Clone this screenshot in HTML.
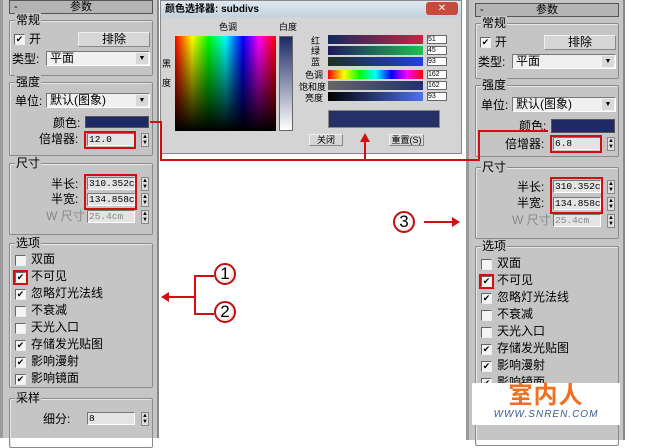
<!DOCTYPE html><html><head><meta charset="utf-8"><style>
*{margin:0;padding:0;box-sizing:border-box}
body{width:650px;height:429px;background:#fff;position:relative;overflow:hidden;font-family:"Liberation Sans","Noto Sans CJK SC",sans-serif;font-size:11px;color:#000}
.a{position:absolute}
.pan{position:absolute;width:159px;height:440px;background:#c5c5c5;border-left:3px solid #9a9a9a;border-right:2px solid #888}
.hdr{position:absolute;left:6px;top:0;width:144px;height:14px;background:#b4b4b4;border:1px solid #555;text-align:center;line-height:12px;font-size:11px}
.hdr b{position:absolute;left:4px;font-weight:normal}
.grp{position:absolute;left:6px;width:144px;border:1px solid #8a8a8a;border-radius:2px;box-shadow:inset 1px 1px 0 #e8e8e8}
.gt{position:absolute;top:-8px;left:5px;background:#c5c5c5;padding:0 1px;font-size:12px;line-height:14px}
.cb{position:absolute;width:11px;height:11px;background:#f4f4f4;border:1px solid #666;border-right-color:#eee;border-bottom-color:#eee;font-size:9px;line-height:9px;text-align:center}
.lb{position:absolute;font-size:12px;line-height:13px;white-space:nowrap}
.dd{position:absolute;background:#f0f0f0;border:1px solid #777;border-right-color:#fff;border-bottom-color:#fff;height:15px;line-height:13px;padding-left:3px;font-size:12px}
.dd i{position:absolute;right:1px;top:1px;width:12px;height:11px;background:#d8d8d8;font-style:normal;font-size:7px;text-align:center;line-height:11px}
.sp{position:absolute;background:#e4e4e4;border:1px solid #777;border-right-color:#fff;border-bottom-color:#fff;height:13px;line-height:11px;padding-left:1px;font-family:"Liberation Mono",monospace;font-size:9.5px;overflow:hidden;white-space:nowrap}
.ar{position:absolute;width:8px;height:14px;background:#ddd;border:1px solid #888;font-size:6px;line-height:6px;text-align:center}
.rb{position:absolute;border:2px solid #d01010}
.btn{position:absolute;background:#d6d6d6;border:1px solid #888;border-top-color:#eee;border-left-color:#eee;text-align:center;line-height:13px;font-size:12px}
.circ{position:absolute;width:22px;height:22px;border-radius:50%;border:2px solid #c01010;background:radial-gradient(circle at 40% 35%,#fff 40%,#f0c8c8);text-align:center;font-size:17px;line-height:18px;font-family:"Liberation Sans",sans-serif}
.rl{position:absolute;background:#d01010}
</style></head><body>

<!-- LEFT PANEL -->
<div class="pan" style="left:0;top:-2px">
 <div style="position:absolute;top:2px;left:0;width:152px;height:440px">
 <div class="hdr"><b>-</b>参数</div>
 <div class="grp" style="top:20px;height:56px"><span class="gt">常规</span></div>
 <div class="cb" style="left:11px;top:34px">✔</div><span class="lb" style="left:26px;top:33px">开</span>
 <div class="btn" style="left:75px;top:32px;width:72px;height:15px">排除</div>
 <span class="lb" style="left:9px;top:53px">类型:</span>
 <div class="dd" style="left:43px;top:51px;width:104px">平面<i>▼</i></div>
 <div class="grp" style="top:82px;height:74px"><span class="gt">强度</span></div>
 <span class="lb" style="left:12px;top:95px">单位:</span>
 <div class="dd" style="left:43px;top:93px;width:104px">默认(图象)<i>▼</i></div>
 <span class="lb" style="left:50px;top:117px">颜色:</span>
 <div class="a" style="left:82px;top:116px;width:64px;height:12px;background:#1d2a63;border:1px solid #555"></div>
 <span class="lb" style="left:36px;top:133px">倍增器:</span>
 <div class="sp" style="left:84px;top:133px;width:48px">12.0</div>
 <div class="rb" style="left:81px;top:131px;width:52px;height:18px"></div>
 <div class="ar" style="left:138px;top:133px">▲<br>▼</div>
 <div class="grp" style="top:163px;height:72px"><span class="gt">尺寸</span></div>
 <span class="lb" style="left:48px;top:178px">半长:</span>
 <div class="sp" style="left:84px;top:177px;width:48px">310.352c</div>
 <span class="lb" style="left:48px;top:193px">半宽:</span>
 <div class="sp" style="left:84px;top:193px;width:48px">134.858c</div>
 <div class="rb" style="left:81px;top:174px;width:53px;height:36px"></div>
 <div class="ar" style="left:138px;top:177px">▲<br>▼</div><div class="ar" style="left:138px;top:193px">▲<br>▼</div>
 <span class="lb" style="left:43px;top:210px;color:#888">W 尺寸</span>
 <div class="sp" style="left:84px;top:210px;width:48px;color:#888">25.4cm</div>
 <div class="ar" style="left:138px;top:210px">▲<br>▼</div>
 <div class="grp" style="top:243px;height:145px"><span class="gt">选项</span></div>
 <div class="cb" style="left:12px;top:255px"></div><span class="lb" style="left:28px;top:253px">双面</span>
 <div class="cb" style="left:12px;top:272px">✔</div><div class="rb" style="left:10px;top:270px;width:15px;height:15px"></div><span class="lb" style="left:28px;top:270px">不可见</span>
 <div class="cb" style="left:12px;top:289px">✔</div><span class="lb" style="left:28px;top:287px">忽略灯光法线</span>
 <div class="cb" style="left:12px;top:306px"></div><span class="lb" style="left:28px;top:304px">不衰减</span>
 <div class="cb" style="left:12px;top:323px"></div><span class="lb" style="left:28px;top:321px">天光入口</span>
 <div class="cb" style="left:12px;top:340px">✔</div><span class="lb" style="left:28px;top:338px">存储发光贴图</span>
 <div class="cb" style="left:12px;top:357px">✔</div><span class="lb" style="left:28px;top:355px">影响漫射</span>
 <div class="cb" style="left:12px;top:374px">✔</div><span class="lb" style="left:28px;top:372px">影响镜面</span>
 <div class="grp" style="top:398px;height:50px"><span class="gt">采样</span></div>
 <span class="lb" style="left:40px;top:413px">细分:</span>
 <div class="sp" style="left:84px;top:412px;width:48px">8</div>
 <div class="ar" style="left:138px;top:412px">▲<br>▼</div>
 </div>
</div>

<!-- RIGHT PANEL -->
<div class="pan" style="left:466px;top:0">
 <div style="position:absolute;top:3px;left:0;width:152px;height:440px">
 <div class="hdr"><b>-</b>参数</div>
 <div class="grp" style="top:20px;height:56px"><span class="gt">常规</span></div>
 <div class="cb" style="left:11px;top:34px">✔</div><span class="lb" style="left:26px;top:33px">开</span>
 <div class="btn" style="left:75px;top:32px;width:72px;height:15px">排除</div>
 <span class="lb" style="left:9px;top:53px">类型:</span>
 <div class="dd" style="left:43px;top:51px;width:104px">平面<i>▼</i></div>
 <div class="grp" style="top:82px;height:72px"><span class="gt">强度</span></div>
 <span class="lb" style="left:12px;top:96px">单位:</span>
 <div class="dd" style="left:43px;top:94px;width:104px">默认(图象)<i>▼</i></div>
 <span class="lb" style="left:50px;top:117px">颜色:</span>
 <div class="a" style="left:82px;top:116px;width:64px;height:14px;background:#1d2a63;border:1px solid #555"></div>
 <span class="lb" style="left:36px;top:135px">倍增器:</span>
 <div class="sp" style="left:84px;top:134px;width:48px">6.8</div>
 <div class="rb" style="left:81px;top:132px;width:52px;height:18px"></div>
 <div class="ar" style="left:138px;top:134px">▲<br>▼</div>
 <div class="grp" style="top:164px;height:72px"><span class="gt">尺寸</span></div>
 <span class="lb" style="left:48px;top:178px">半长:</span>
 <div class="sp" style="left:84px;top:177px;width:48px">310.352c</div>
 <span class="lb" style="left:48px;top:194px">半宽:</span>
 <div class="sp" style="left:84px;top:194px;width:48px">134.858c</div>
 <div class="rb" style="left:81px;top:174px;width:53px;height:37px"></div>
 <div class="ar" style="left:138px;top:177px">▲<br>▼</div><div class="ar" style="left:138px;top:194px">▲<br>▼</div>
 <span class="lb" style="left:43px;top:211px;color:#888">W 尺寸</span>
 <div class="sp" style="left:84px;top:211px;width:48px;color:#888">25.4cm</div>
 <div class="ar" style="left:138px;top:211px">▲<br>▼</div>
 <div class="grp" style="top:243px;height:200px"><span class="gt">选项</span></div>
 <div class="cb" style="left:12px;top:256px"></div><span class="lb" style="left:28px;top:254px">双面</span>
 <div class="cb" style="left:12px;top:273px">✔</div><div class="rb" style="left:10px;top:271px;width:15px;height:15px"></div><span class="lb" style="left:28px;top:271px">不可见</span>
 <div class="cb" style="left:12px;top:290px">✔</div><span class="lb" style="left:28px;top:288px">忽略灯光法线</span>
 <div class="cb" style="left:12px;top:307px"></div><span class="lb" style="left:28px;top:305px">不衰减</span>
 <div class="cb" style="left:12px;top:324px"></div><span class="lb" style="left:28px;top:322px">天光入口</span>
 <div class="cb" style="left:12px;top:341px">✔</div><span class="lb" style="left:28px;top:339px">存储发光贴图</span>
 <div class="cb" style="left:12px;top:358px">✔</div><span class="lb" style="left:28px;top:356px">影响漫射</span>
 <div class="cb" style="left:12px;top:375px">✔</div><span class="lb" style="left:28px;top:373px">影响镜面</span>
 </div>
</div>
<div class="a" style="left:472px;top:383px;width:148px;height:42px;background:#fff"></div>
<div class="a" style="left:472px;top:381px;width:148px;text-align:center;color:#f07020;font-size:24px;font-weight:bold;letter-spacing:1px;line-height:30px">室内人</div>
<div class="a" style="left:472px;top:409px;width:148px;text-align:center;color:#3a5aa0;font-size:10px;font-style:italic;letter-spacing:1px">WWW.SNREN.COM</div>

<!-- DIALOG -->
<div class="a" style="left:160px;top:0;width:302px;height:154px;background:#d4d4d4;border:1px solid #888">
 <div class="a" style="left:0;top:0;width:300px;height:16px;background:linear-gradient(#dfe8f0,#c4d2de)"></div>
 <span class="lb" style="left:4px;top:2px;font-size:10px;font-weight:bold">颜色选择器: subdivs</span>
 <div class="a" style="left:265px;top:1px;width:32px;height:13px;background:#c84a3a;border-radius:3px;color:#fff;text-align:center;font-size:10px;line-height:13px">✕</div>
 <span class="lb" style="left:58px;top:20px;font-size:9px">色调</span>
 <span class="lb" style="left:118px;top:20px;font-size:9px">白度</span>
 <span class="lb" style="left:1px;top:57px;font-size:9px">黑</span><span class="lb" style="left:1px;top:76px;font-size:9px">度</span>
 <div class="a" style="left:14px;top:35px;width:101px;height:95px;background:linear-gradient(transparent,#000),linear-gradient(90deg,#f00,#ff0 17%,#0f0 33%,#0ff 50%,#00f 67%,#f0f 83%,#f00)"></div>
 <div class="a" style="left:118px;top:35px;width:14px;height:95px;background:linear-gradient(#1d2a63,#fff);border:1px solid #666"></div>
 <span class="lb" style="left:150px;top:34px;font-size:9px">红</span><span class="lb" style="left:150px;top:44px;font-size:9px">绿</span><span class="lb" style="left:150px;top:55px;font-size:9px">蓝</span>
 <span class="lb" style="left:144px;top:68px;font-size:9px">色调</span><span class="lb" style="left:138px;top:80px;font-size:9px">饱和度</span><span class="lb" style="left:144px;top:91px;font-size:9px">亮度</span>
 <div class="a" style="left:167px;top:34px;width:95px;height:9px;background:linear-gradient(90deg,#102a60,#d02040)"></div>
 <div class="a" style="left:167px;top:45px;width:95px;height:9px;background:linear-gradient(90deg,#201860,#20c050)"></div>
 <div class="a" style="left:167px;top:56px;width:95px;height:9px;background:linear-gradient(90deg,#203020,#2040e0)"></div>
 <div class="a" style="left:167px;top:69px;width:95px;height:9px;background:linear-gradient(90deg,#f00,#ff0,#0f0,#0ff,#00f,#f0f,#f00)"></div>
 <div class="a" style="left:167px;top:80px;width:95px;height:9px;background:linear-gradient(90deg,#666,#223070)"></div>
 <div class="a" style="left:167px;top:91px;width:95px;height:9px;background:linear-gradient(90deg,#000,#5070f0)"></div>
 <div class="a" style="left:266px;top:34px;width:20px;height:9px;background:#fff;border:1px solid #666;font-size:7px;line-height:7px">51</div>
 <div class="a" style="left:266px;top:45px;width:20px;height:9px;background:#fff;border:1px solid #666;font-size:7px;line-height:7px">45</div>
 <div class="a" style="left:266px;top:56px;width:20px;height:9px;background:#fff;border:1px solid #666;font-size:7px;line-height:7px">93</div>
 <div class="a" style="left:266px;top:69px;width:20px;height:9px;background:#fff;border:1px solid #666;font-size:7px;line-height:7px">162</div>
 <div class="a" style="left:266px;top:80px;width:20px;height:9px;background:#fff;border:1px solid #666;font-size:7px;line-height:7px">162</div>
 <div class="a" style="left:266px;top:91px;width:20px;height:9px;background:#fff;border:1px solid #666;font-size:7px;line-height:7px">93</div>
 <div class="a" style="left:167px;top:109px;width:112px;height:18px;background:#243066;border:1px solid #888"></div>
 <div class="btn" style="left:148px;top:133px;width:34px;height:12px;font-size:9px;line-height:10px">关闭</div>
 <div class="btn" style="left:228px;top:133px;width:35px;height:12px;font-size:9px;line-height:10px">重置(S)</div>
</div>

<!-- red lines -->
<div class="rl" style="left:150px;top:121px;width:11px;height:2px"></div>
<div class="rl" style="left:160px;top:121px;width:2px;height:40px"></div>
<div class="rl" style="left:160px;top:159px;width:320px;height:2px"></div>
<div class="rl" style="left:478px;top:130px;width:2px;height:31px"></div>
<div class="rl" style="left:478px;top:130px;width:70px;height:2px"></div>
<div class="rl" style="left:364px;top:140px;width:2px;height:20px"></div>
<div class="a" style="left:360px;top:133px;width:0;height:0;border-left:5px solid transparent;border-right:5px solid transparent;border-bottom:9px solid #d01010"></div>

<div class="circ" style="left:393px;top:211px">3</div>
<div class="rl" style="left:424px;top:221px;width:30px;height:2px"></div>
<div class="a" style="left:452px;top:217px;border-top:5px solid transparent;border-bottom:5px solid transparent;border-left:8px solid #d01010"></div>
<div class="circ" style="left:214px;top:263px">1</div>
<div class="circ" style="left:214px;top:301px">2</div>
<div class="rl" style="left:194px;top:275px;width:2px;height:40px"></div>
<div class="rl" style="left:194px;top:275px;width:20px;height:2px"></div>
<div class="rl" style="left:194px;top:313px;width:20px;height:2px"></div>
<div class="rl" style="left:168px;top:296px;width:27px;height:2px"></div>
<div class="a" style="left:161px;top:292px;border-top:5px solid transparent;border-bottom:5px solid transparent;border-right:8px solid #d01010"></div>
</body></html>
